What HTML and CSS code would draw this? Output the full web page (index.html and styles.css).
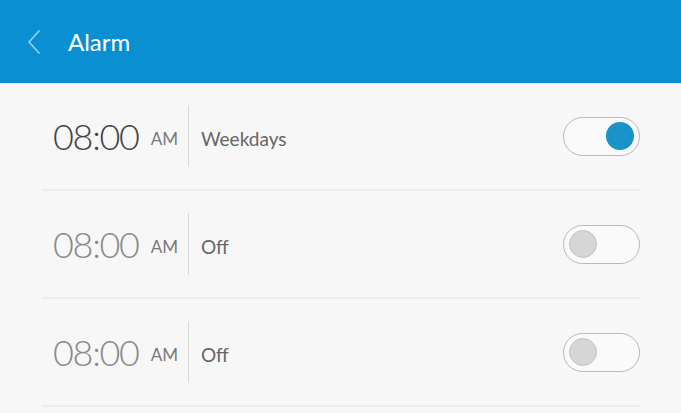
FILE: index.html
```html
<html>

<head>
  <meta name="viewport" content="width=device-width, initial-scale=1">
  <link rel="stylesheet" href="styles.css">
</head>

<body>
  <div class="header">
    <svg class="back" width="16" height="26" viewBox="0 0 16 26">
      <path d="M13 2 L3 13 L13 24" fill="none" stroke="#8fd0f2" stroke-width="1.8" stroke-linecap="round" stroke-linejoin="round"/>
    </svg>
    <span class="title">Alarm</span>
  </div>

  <div class="list">
    <div class="row active">
      <span class="time">08:00</span>
      <span class="ampm">AM</span>
      <span class="sep"></span>
      <span class="repeat">Weekdays</span>
      <span class="toggle on"><span class="knob"></span></span>
    </div>
    <div class="row">
      <span class="time">08:00</span>
      <span class="ampm">AM</span>
      <span class="sep"></span>
      <span class="repeat">Off</span>
      <span class="toggle"><span class="knob"></span></span>
    </div>
    <div class="row">
      <span class="time">08:00</span>
      <span class="ampm">AM</span>
      <span class="sep"></span>
      <span class="repeat">Off</span>
      <span class="toggle"><span class="knob"></span></span>
    </div>
  </div>
</body>

</html>
```

FILE: styles.css
```css
body {
  margin: 0;
  background-color: #f7f7f7;
  font-family: 'Lato', sans-serif;
}

.header {
  height: 83px;
  background-color: #0b8fd3;
  display: flex;
  align-items: center;
  padding-left: 26px;
}

.back {
  margin-right: 26px;
  margin-top: 1px;
}

.title {
  color: white;
  font-size: 24px;
}

.list {
  padding: 0 41px 0 42px;
}

.row {
  height: 108px;
  box-sizing: border-box;
  border-bottom: 2px solid #ececec;
  display: flex;
  align-items: center;
  padding-left: 11px;
}

.time {
  font-size: 36px;
  font-weight: 300;
  color: #8a8a8a;
  letter-spacing: -1.3px;
}

.active .time {
  color: #444;
}

.ampm {
  font-size: 17px;
  color: #7a7a7a;
  margin: 4px 0 0 12px;
}

.sep {
  width: 1px;
  height: 62px;
  background-color: #d8d8d8;
  margin: 0 12px 0 10px;
}

.repeat {
  font-size: 19px;
  color: #666;
  flex: 1;
  margin-top: 4px;
}

.toggle {
  width: 77px;
  height: 39px;
  box-sizing: border-box;
  border: 1px solid #b9b9b9;
  border-radius: 20px;
  background-color: #fafafa;
  display: flex;
  align-items: center;
  padding: 0 5px;
}

.toggle .knob {
  width: 28px;
  height: 28px;
  border-radius: 50%;
  box-sizing: border-box;
  background-color: #d6d6d6;
  border: 1px solid #c4c4c4;
}

.toggle.on {
  justify-content: flex-end;
}

.toggle.on .knob {
  background-color: #1a93c9;
  border: none;
}
```
